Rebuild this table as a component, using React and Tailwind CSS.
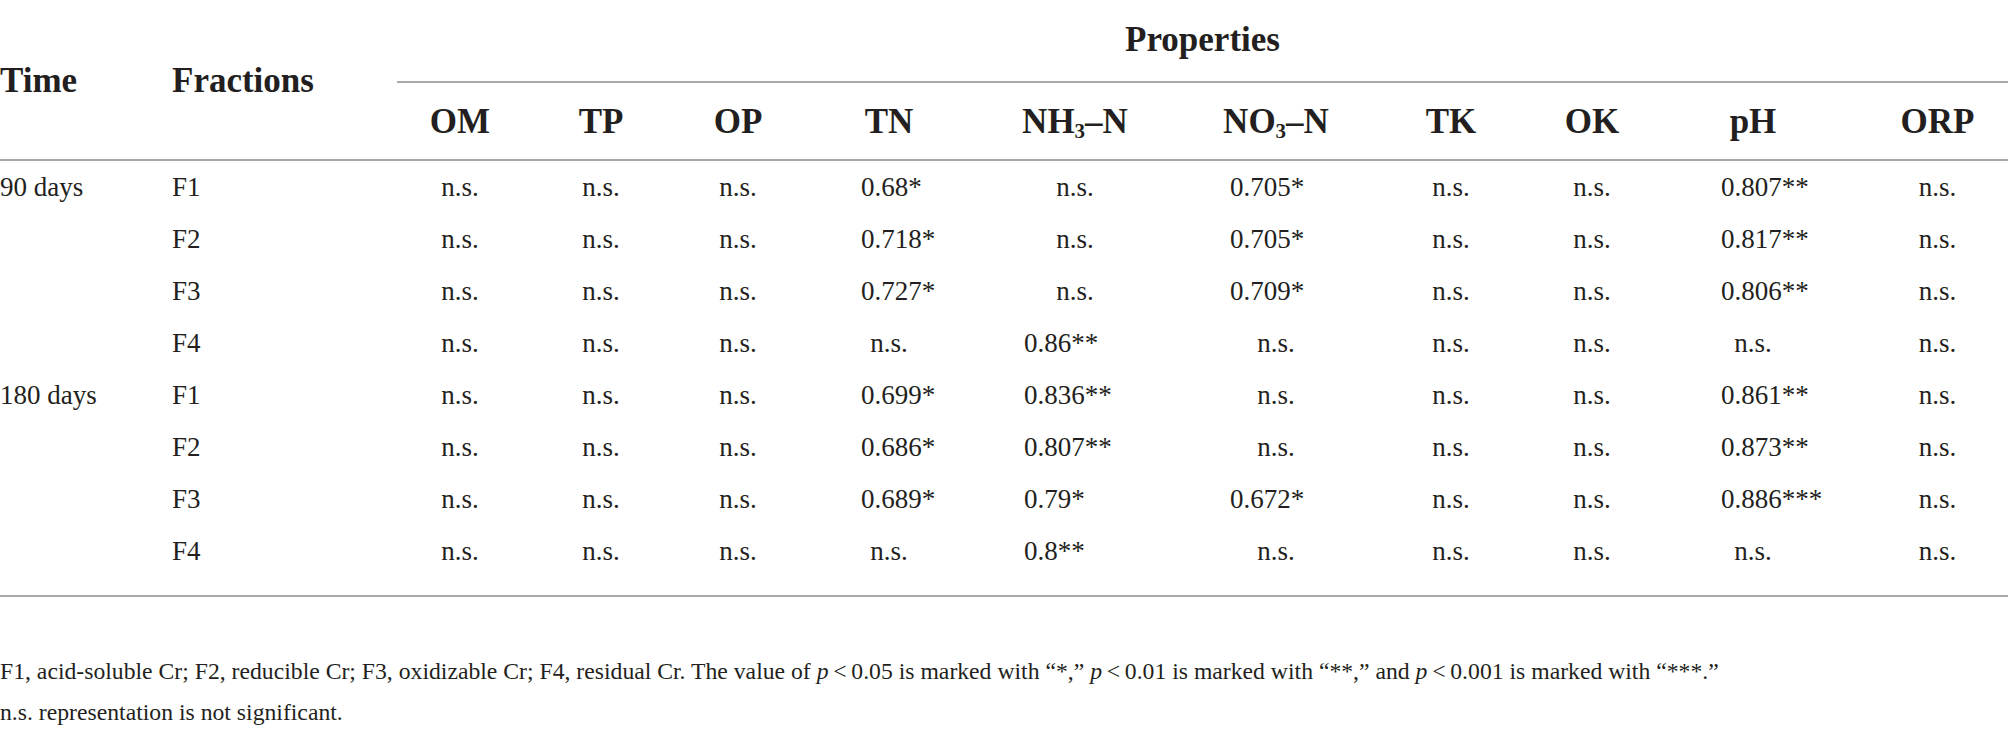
import React from 'react';

const columns = [
    { key: 'OM', width: 'w-[126px]', numPad: '' },
    { key: 'TP', width: 'w-[156px]', numPad: '' },
    { key: 'OP', width: 'w-[118px]', numPad: '' },
    { key: 'TN', width: 'w-[184px]', numPad: 'pl-[64px]' },
    { key: 'NH3', width: 'w-[188px]', numPad: 'pl-[43px]' },
    { key: 'NO3', width: 'w-[214px]', numPad: 'pl-[61px]' },
    { key: 'TK', width: 'w-[136px]', numPad: '' },
    { key: 'OK', width: 'w-[146px]', numPad: '' },
    { key: 'pH', width: 'w-[176px]', numPad: 'pl-[56px]' },
    { key: 'ORP', width: 'w-[167px] pl-[26px]', numPad: '' },
];

const ns = 'n.s.';

const rows = [
    { time: '90 days', fraction: 'F1', values: [ns, ns, ns, '0.68*', ns, '0.705*', ns, ns, '0.807**', ns] },
    { time: '', fraction: 'F2', values: [ns, ns, ns, '0.718*', ns, '0.705*', ns, ns, '0.817**', ns] },
    { time: '', fraction: 'F3', values: [ns, ns, ns, '0.727*', ns, '0.709*', ns, ns, '0.806**', ns] },
    { time: '', fraction: 'F4', values: [ns, ns, ns, ns, '0.86**', ns, ns, ns, ns, ns] },
    { time: '180 days', fraction: 'F1', values: [ns, ns, ns, '0.699*', '0.836**', ns, ns, ns, '0.861**', ns] },
    { time: '', fraction: 'F2', values: [ns, ns, ns, '0.686*', '0.807**', ns, ns, ns, '0.873**', ns] },
    { time: '', fraction: 'F3', values: [ns, ns, ns, '0.689*', '0.79*', '0.672*', ns, ns, '0.886***', ns] },
    { time: '', fraction: 'F4', values: [ns, ns, ns, ns, '0.8**', ns, ns, ns, ns, ns] },
];

function HeaderLabel({ name }) {
    if (name === 'NH3') {
        return <span>NH<sub className="text-[21px]">3</sub>–N</span>;
    }
    if (name === 'NO3') {
        return <span>NO<sub className="text-[21px]">3</sub>–N</span>;
    }
    return <span>{name}</span>;
}

function App() {
    return (
        <div className="w-[2008px] h-[735px] bg-white text-[#231f20] font-['Liberation_Serif',serif] overflow-hidden">
            {/* header */}
            <div className="flex h-[159px] font-bold text-[35px]">
                <div className="w-[172px] flex items-center pt-[3px]">Time</div>
                <div className="w-[225px] flex items-center pt-[3px]">Fractions</div>
                <div className="flex-1 flex flex-col">
                    <div className="h-[81px] flex items-center justify-center">Properties</div>
                    <div className="h-[2px] bg-[#a8a8a8]" />
                    <div className="flex-1 flex items-center pt-[2px]">
                        {columns.map((col) => (
                            <div key={col.key} className={`${col.width} text-center`}>
                                <HeaderLabel name={col.key} />
                            </div>
                        ))}
                    </div>
                </div>
            </div>
            <div className="h-[2px] bg-[#a8a8a8]" />

            {/* body */}
            <div className="pb-[18px] text-[27px]">
                {rows.map((row, i) => (
                    <div key={i} className="flex h-[52px] items-center">
                        <div className="w-[172px]">{row.time}</div>
                        <div className="w-[225px]">{row.fraction}</div>
                        {row.values.map((val, j) => {
                            const col = columns[j];
                            const isNum = val !== ns && col.numPad;
                            return (
                                <div
                                    key={j}
                                    className={`${col.width} ${isNum ? `${col.numPad} text-left` : 'text-center'}`}
                                >
                                    {val}
                                </div>
                            );
                        })}
                    </div>
                ))}
            </div>
            <div className="h-[2px] bg-[#a8a8a8]" />

            {/* footnote */}
            <div className="mt-[54px] text-[23.7px] leading-[41px]">
                <p>
                    F1, acid-soluble Cr; F2, reducible Cr; F3, oxidizable Cr; F4, residual Cr. The value of{' '}
                    <i>p</i>{'\u2009<\u20090.05'} is marked with “*,” <i>p</i>{'\u2009<\u20090.01'} is marked with “**,” and{' '}
                    <i>p</i>{'\u2009<\u20090.001'} is marked with “***.”
                </p>
                <p>n.s. representation is not significant.</p>
            </div>
        </div>
    );
}

export default App;
